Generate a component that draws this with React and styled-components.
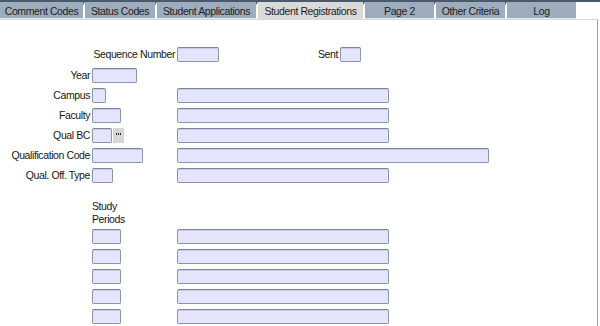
import React from "react";
import styled, { createGlobalStyle } from "styled-components";

const Global = createGlobalStyle`
  html, body { margin: 0; padding: 0; background: #ffffff; }
  body {
    font-family: "Liberation Sans", Arial, sans-serif;
    font-size: 10.5px;
    letter-spacing: -0.4px;
    color: #161616;
  }
`;

const Page = styled.div`
  width: 600px;
  height: 326px;
  overflow: hidden;
  background: #fff;
`;

const TabBar = styled.div`
  display: flex;
  gap: 2px;
  height: 19px;
  border-top: 2px solid #4b5a6a;
  background: #fff;
  box-sizing: border-box;
`;

const Tab = styled.div`
  width: ${(p) => p.$w}px;
  height: 17px;
  display: flex;
  align-items: center;
  justify-content: center;
  padding-top: 1px;
  background: ${(p) => (p.$active ? "#dadada" : "#9dadbd")};
  color: #1c1c1c;
  white-space: nowrap;
  box-sizing: border-box;
  position: relative;
  border-bottom: 1px solid ${(p) => (p.$active ? "#dadada" : "#e4e8ee")};
  &::before {
    content: "";
    position: absolute;
    left: -2px;
    top: 0;
    border-top: 3px solid #4b5a6a;
    border-right: 2px solid transparent;
  }
`;

const Panel = styled.div`
  width: 598px;
  height: 307px;
  box-sizing: border-box;
  border-top: 1px solid #d4d8de;
  border-right: 1px solid #9aa2ae;
  padding-top: 24px;
  display: flex;
  flex-direction: column;
`;

const Row = styled.div`
  display: grid;
  grid-template-columns: 90px 83px 1fr;
  column-gap: 2px;
  align-items: center;
  height: 20px;
  margin-top: ${(p) => p.$mt || 0}px;
`;

const Label = styled.div`
  text-align: right;
  grid-column: ${(p) => p.$span || "1"};
  white-space: nowrap;
  line-height: 15px;
`;

const Cell = styled.div`
  display: flex;
  align-items: center;
  grid-column: ${(p) => p.$col};
`;

const Field = styled.div`
  width: ${(p) => p.$w}px;
  height: 15px;
  box-sizing: border-box;
  background: #e4e4fc;
  border: 1px solid #8a94aa;
  border-top-color: #7a84a0;
  border-radius: 2px;
  box-shadow: inset 0 1px 0 #c8cce0;
`;

const DotBtn = styled.div`
  width: 11px;
  height: 15px;
  margin-left: 1px;
  background: #d6d6d6;
  display: flex;
  align-items: center;
  justify-content: center;
  gap: 1px;
  padding-bottom: 2px;
  box-sizing: border-box;
`;

const Dot = styled.span`
  width: 1px;
  height: 2px;
  background: #2a2a2a;
`;

const SentWrap = styled.div`
  display: flex;
  align-items: center;
  justify-content: flex-end;
  gap: 2px;
  width: 142px;
`;

const StudyHead = styled.div`
  display: grid;
  grid-template-columns: 90px 83px 1fr;
  column-gap: 2px;
  margin-top: 15px;
  line-height: 13px;
`;

const StudyText = styled.div`
  grid-column: 2;
`;

const tabs = [
  ["Comment Codes", 83],
  ["Status Codes", 70],
  ["Student Applications", 99],
  ["Student Registrations", 105, true],
  ["Page 2", 69],
  ["Other Criteria", 69],
  ["Log", 69],
];

export default function App() {
  return (
    <Page>
      <Global />
      <TabBar>
        {tabs.map(([t, w, a]) => (
          <Tab key={t} $w={w} $active={a}>
            {t}
          </Tab>
        ))}
      </TabBar>
      <Panel>
        <Row>
          <Label $span="1 / 3">Sequence Number</Label>
          <Cell $col="3">
            <Field $w={42} />
            <SentWrap>
              <Label>Sent</Label>
              <Field $w={21} />
            </SentWrap>
          </Cell>
        </Row>

        <Row $mt={1}>
          <Label>Year</Label>
          <Cell $col="2 / 4">
            <Field $w={45} />
          </Cell>
        </Row>

        <Row>
          <Label>Campus</Label>
          <Cell $col="2">
            <Field $w={14} />
          </Cell>
          <Cell $col="3">
            <Field $w={212} />
          </Cell>
        </Row>

        <Row>
          <Label>Faculty</Label>
          <Cell $col="2">
            <Field $w={29} />
          </Cell>
          <Cell $col="3">
            <Field $w={212} />
          </Cell>
        </Row>

        <Row>
          <Label>Qual BC</Label>
          <Cell $col="2">
            <Field $w={20} />
            <DotBtn>
              <Dot />
              <Dot />
              <Dot />
            </DotBtn>
          </Cell>
          <Cell $col="3">
            <Field $w={212} />
          </Cell>
        </Row>

        <Row>
          <Label>Qualification Code</Label>
          <Cell $col="2">
            <Field $w={51} />
          </Cell>
          <Cell $col="3">
            <Field $w={312} />
          </Cell>
        </Row>

        <Row>
          <Label>Qual. Off. Type</Label>
          <Cell $col="2">
            <Field $w={21} />
          </Cell>
          <Cell $col="3">
            <Field $w={212} />
          </Cell>
        </Row>

        <StudyHead>
          <StudyText>
            Study
            <br />
            Periods
          </StudyText>
        </StudyHead>

        {[0, 1, 2, 3, 4].map((i) => (
          <Row key={i}>
            <Cell $col="2">
              <Field $w={29} />
            </Cell>
            <Cell $col="3">
              <Field $w={212} />
            </Cell>
          </Row>
        ))}
      </Panel>
    </Page>
  );
}
